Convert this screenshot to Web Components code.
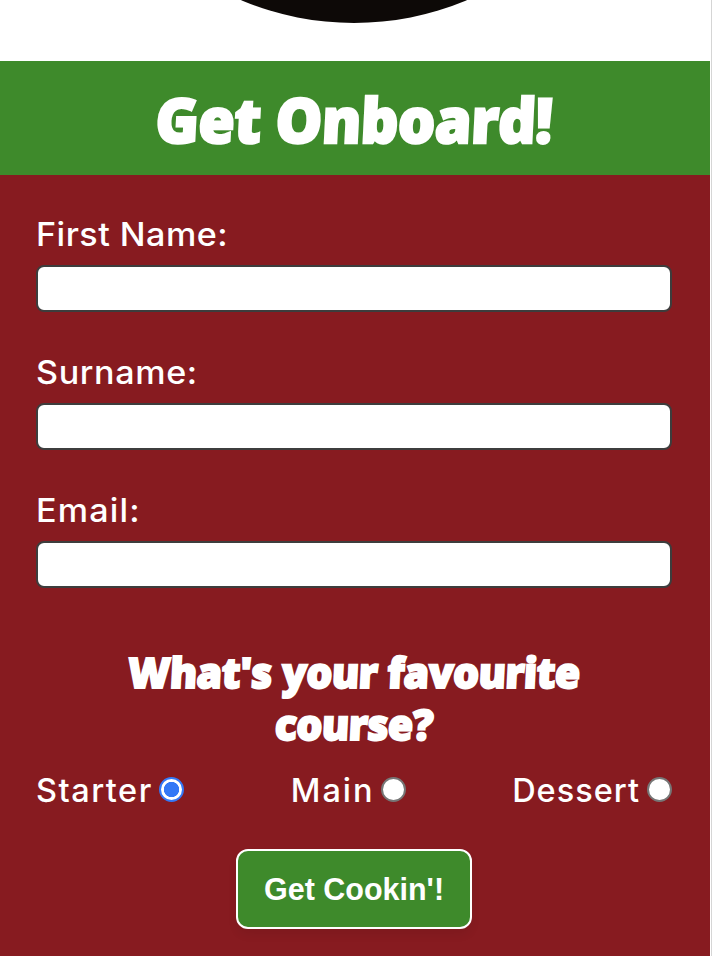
<!DOCTYPE html>
<html lang="en"><head><meta charset="utf-8"><title>Get Onboard!</title>
<style>html,body{margin:0;height:956px;overflow:hidden;background:#fff}</style></head>
<body><signup-page></signup-page>
<script>
const define = (name, markup) => customElements.define(name, class extends HTMLElement {
  constructor() {
    super();
    this.attachShadow({mode: 'open'}).innerHTML = markup;
  }
});
define('round-photo', `<style>
:host{display:flex;height:61px;overflow:hidden;align-items:flex-end;justify-content:center;box-sizing:border-box;padding:0 2px 38px 0;background:#fff}
div{flex:none;width:580px;height:580px;border-radius:50%;background:#0d0907}
</style><div></div>`);
define('title-bar', `<style>
:host{display:block;height:114px;background:#3e8a2b;color:#fff;text-align:center}
h1{margin:0;padding-top:1px;font:800 62px/114px "Open Sans",sans-serif;-webkit-text-stroke:2.4px #fff;letter-spacing:-.6px;transform:translateX(-1px) scaleX(.95) skewX(-3deg)}
</style><h1><slot></slot></h1>`);
define('text-field', `<style>
:host{display:block;height:138px}
label{display:block;height:54px;font:450 32.5px/48px Inter,sans-serif;letter-spacing:var(--gap,0);transform:scaleX(1.05);transform-origin:0 0}
input{display:block;box-sizing:border-box;width:636px;height:47px;margin:0;border:2px solid #3d3d3d;border-radius:8px;background:#fff}
</style><label for="field"><slot></slot></label><input id="field" type="text">`);
define('course-option', `<style>
:host{display:flex;align-items:center;height:48px;font:450 32.5px/48px Inter,sans-serif;letter-spacing:var(--gap,0)}
i{box-sizing:border-box;width:25px;height:25px;border-radius:50%;border:2px solid #767676;background:#fff;margin:0 0 3px calc(8px - var(--gap,0px))}
:host([checked]) i{border:2px solid #3478f6;background:radial-gradient(circle,#3478f6 7.3px,#fff 8px)}
</style><slot></slot><i></i>`);
define('submit-button', `<style>
:host{display:block}
button{display:block;box-sizing:border-box;width:236px;height:80px;margin:0 auto;padding:0;border:2px solid #fff;border-radius:12px;background:#3e8a2b;color:#fff;font:700 30.5px/76px "Liberation Sans",sans-serif;box-shadow:0 6px 10px #00000010}
</style><button><slot></slot></button>`);
define('signup-page', `<style>
:host{display:block;box-sizing:border-box;width:712px;height:956px;padding-right:2px;background:linear-gradient(#d5d5d5,#d5d5d5) right/1px 100% no-repeat #fff}
form{box-sizing:border-box;height:781px;padding:36px 38px 0 36px;background:#871b20;color:#fff}
h2{margin:21px 0 0;height:121px;font:800 42px/52px "Open Sans",sans-serif;-webkit-text-stroke:2px #fff;text-align:center;letter-spacing:-.6px}
h2 span{display:block;transform:scaleX(.975) skewX(-3deg)}
.row{display:flex;justify-content:space-between}
submit-button{margin-top:34px}
</style><round-photo></round-photo><title-bar>Get Onboard!</title-bar>
<form>
<text-field style="--gap:.45px">First Name:</text-field><text-field style="--gap:.6px">Surname:</text-field><text-field style="--gap:1.1px">Email:</text-field>
<h2><span>What's your favourite</span><span>course?</span></h2>
<div class="row"><course-option checked style="--gap:1.5px">Starter</course-option><course-option style="--gap:2px">Main</course-option><course-option style="--gap:1px">Dessert</course-option></div>
<submit-button>Get Cookin'!</submit-button>
</form>`);
</script></body></html>
